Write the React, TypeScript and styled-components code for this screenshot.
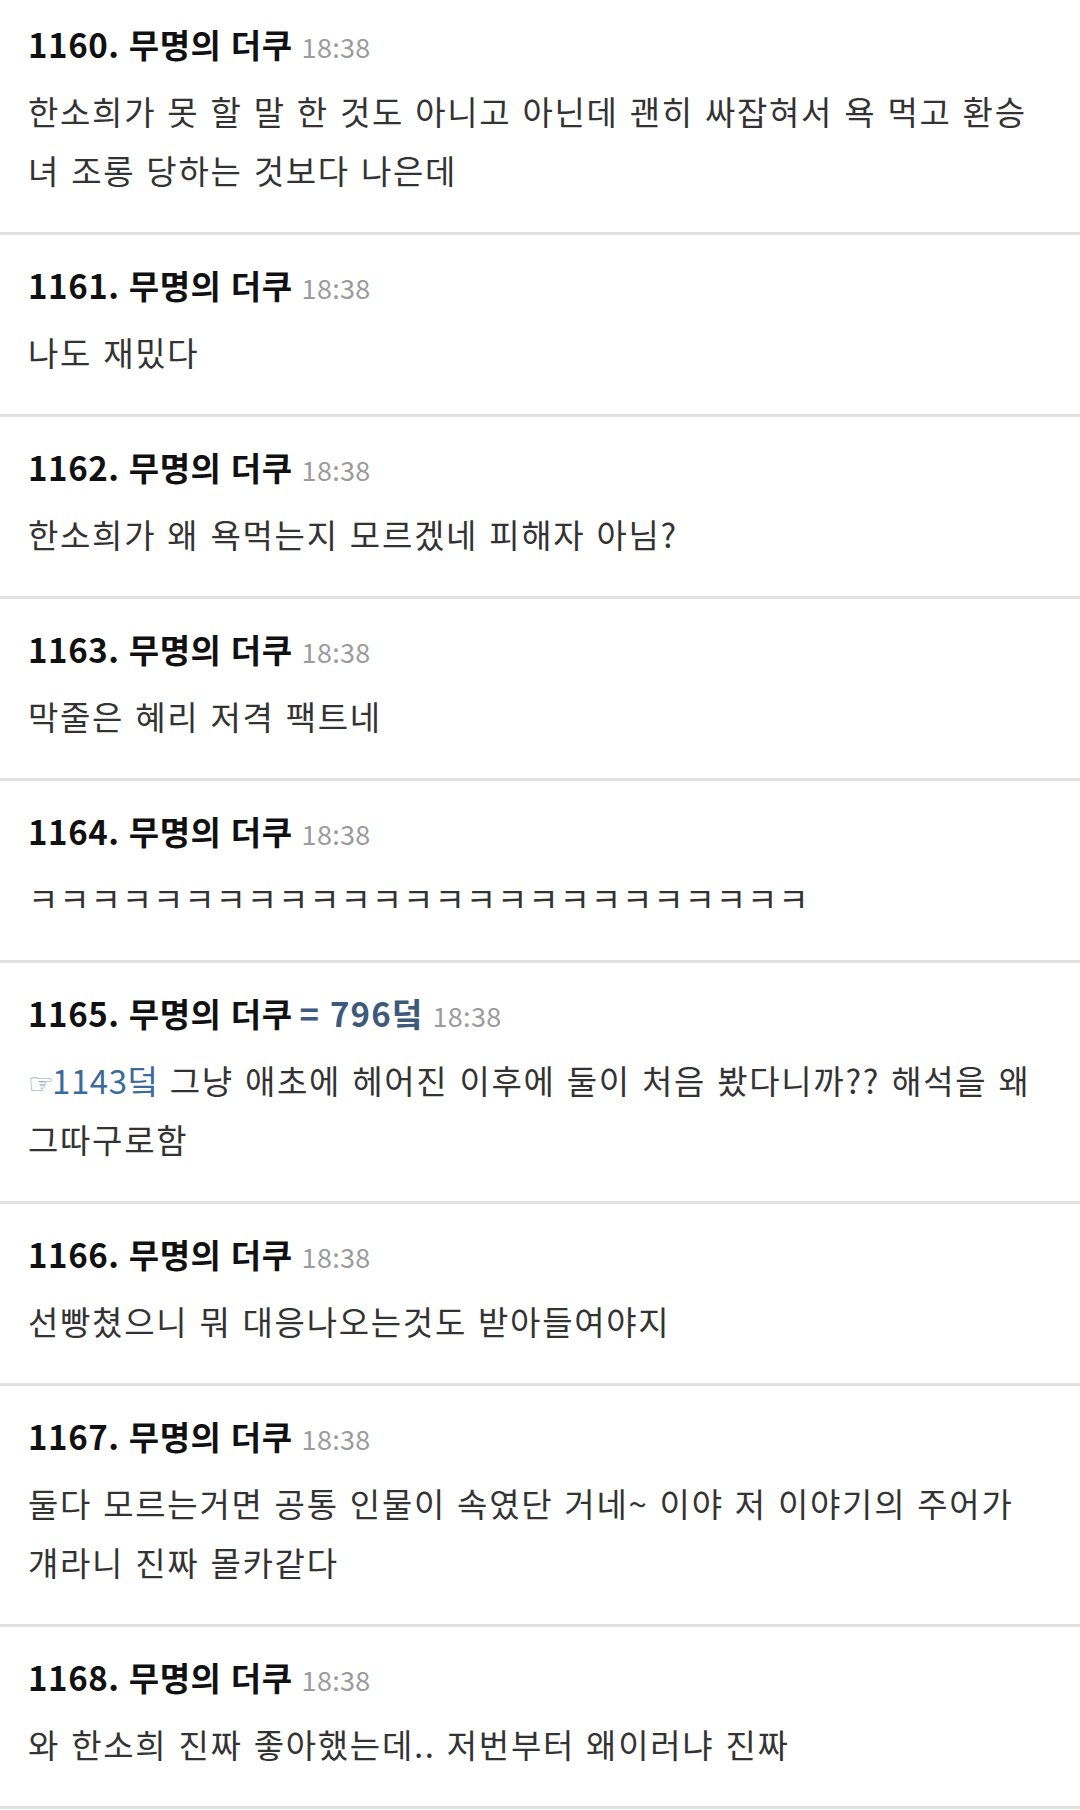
import * as React from "react";
import styled, { createGlobalStyle } from "styled-components";

const GlobalStyle = createGlobalStyle`
  html, body {
    margin: 0;
    padding: 0;
    background: #ffffff;
  }
  body {
    font-family: "Noto Sans CJK KR", "Noto Sans", sans-serif;
    -webkit-font-smoothing: antialiased;
  }
`;

const Thread = styled.div`
  width: 1080px;
  background: #ffffff;
`;

const Post = styled.article<{ $first?: boolean }>`
  display: flex;
  flex-direction: column;
  gap: 16px;
  padding: ${p => (p.$first ? "22px" : "28px")} 30px 32px 28px;
  border-bottom: 3px solid #e1e1e1;
`;

const PostHeader = styled.div`
  display: flex;
  align-items: baseline;
  height: 44px;
  line-height: 44px;
  white-space: nowrap;
`;

const Title = styled.span`
  font-size: 33px;
  font-weight: 700;
  color: #111111;
  word-spacing: 1px;
  letter-spacing: 0.6px;
`;

const Alias = styled.span`
  margin-left: 7px;
  font-size: 33px;
  font-weight: 700;
  color: #3e5a7a;
  word-spacing: 1px;
  letter-spacing: 1.2px;
`;

const Time = styled.span`
  margin-left: 9px;
  font-size: 27px;
  color: #9b9b9b;
  letter-spacing: 0.3px;
`;

const PostBody = styled.div`
  display: flex;
  flex-direction: column;
`;

const BodyLine = styled.div<{ $spread?: number }>`
  height: 59px;
  line-height: 59px;
  font-size: 33px;
  color: #333333;
  white-space: nowrap;
  word-spacing: 2px;
  letter-spacing: ${p => (p.$spread !== undefined ? p.$spread : 1.7)}px;
`;

const Anchor = styled.span`
  color: #3b6a9c;
  letter-spacing: 0.6px;
`;

const Pointer = styled.span`
  font-family: "DejaVu Sans", sans-serif;
  font-size: 29px;
  color: #7f9fc2;
  letter-spacing: 0;
  margin-right: -2px;
`;

interface PostData {
  no: number;
  alias?: string;
  time: string;
  lines: React.ReactNode[];
  spread?: number;
}

const posts: PostData[] = [
  {
    no: 1160,
    time: "18:38",
    lines: [
      "한소희가 못 할 말 한 것도 아니고 아닌데 괜히 싸잡혀서 욕 먹고 환승",
      "녀 조롱 당하는 것보다 나은데"
    ]
  },
  { no: 1161, time: "18:38", lines: ["나도 재밌다"] },
  {
    no: 1162,
    time: "18:38",
    lines: ["한소희가 왜 욕먹는지 모르겠네 피해자 아님?"]
  },
  { no: 1163, time: "18:38", lines: ["막줄은 혜리 저격 팩트네"] },
  {
    no: 1164,
    time: "18:38",
    lines: ["ㅋㅋㅋㅋㅋㅋㅋㅋㅋㅋㅋㅋㅋㅋㅋㅋㅋㅋㅋㅋㅋㅋㅋㅋㅋ"],
    spread: 0.9
  },
  {
    no: 1165,
    alias: "= 796덬",
    time: "18:38",
    lines: [
      <>
        <Anchor>
          <Pointer>☞</Pointer>1143덬
        </Anchor>{" "}
        그냥 애초에 헤어진 이후에 둘이 처음 봤다니까?? 해석을 왜
      </>,
      "그따구로함"
    ]
  },
  {
    no: 1166,
    time: "18:38",
    lines: ["선빵쳤으니 뭐 대응나오는것도 받아들여야지"]
  },
  {
    no: 1167,
    time: "18:38",
    lines: [
      "둘다 모르는거면 공통 인물이 속였단 거네~ 이야 저 이야기의 주어가",
      "걔라니 진짜 몰카같다"
    ]
  },
  {
    no: 1168,
    time: "18:38",
    lines: ["와 한소희 진짜 좋아했는데.. 저번부터 왜이러냐 진짜"]
  }
];

const App: React.FC = () => (
  <>
    <GlobalStyle />
    <Thread>
      {posts.map((post, i) => (
        <Post key={post.no} $first={i === 0}>
          <PostHeader>
            <Title>{`${post.no}. 무명의 더쿠`}</Title>
            {post.alias && <Alias>{post.alias}</Alias>}
            <Time>{post.time}</Time>
          </PostHeader>
          <PostBody>
            {post.lines.map((line, j) => (
              <BodyLine key={j} $spread={post.spread}>
                {line}
              </BodyLine>
            ))}
          </PostBody>
        </Post>
      ))}
    </Thread>
  </>
);

export default App;
